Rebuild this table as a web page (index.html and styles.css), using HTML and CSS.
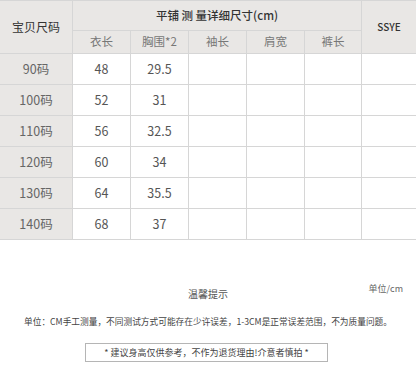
FILE: index.html
```html
<!DOCTYPE html>
<html lang="zh">
<head>
<meta charset="utf-8">
<link rel="stylesheet" href="styles.css">
</head>
<body>
<table class="size-table">
  <colgroup>
    <col class="c-size"><col class="c-m"><col class="c-m"><col class="c-m"><col class="c-m"><col class="c-m5"><col class="c-brand">
  </colgroup>
  <thead>
    <tr class="h1">
      <th rowspan="2" class="main">宝贝尺码</th>
      <th colspan="5" class="main title">平铺 测 量详细尺寸(cm)</th>
      <th rowspan="2" class="brand">SSYE</th>
    </tr>
    <tr class="h2">
      <th>衣长</th><th>胸围*2</th><th>袖长</th><th>肩宽</th><th>裤长</th>
    </tr>
  </thead>
  <tbody>
    <tr><td class="size">90码</td><td>48</td><td>29.5</td><td></td><td></td><td></td><td></td></tr>
    <tr><td class="size">100码</td><td>52</td><td>31</td><td></td><td></td><td></td><td></td></tr>
    <tr><td class="size">110码</td><td>56</td><td>32.5</td><td></td><td></td><td></td><td></td></tr>
    <tr><td class="size">120码</td><td>60</td><td>34</td><td></td><td></td><td></td><td></td></tr>
    <tr><td class="size">130码</td><td>64</td><td>35.5</td><td></td><td></td><td></td><td></td></tr>
    <tr><td class="size">140码</td><td>68</td><td>37</td><td></td><td></td><td></td><td></td></tr>
  </tbody>
</table>

<section class="notes">
  <div class="notes-head">
    <span></span>
    <h2 class="notes-title">温馨提示</h2>
    <span class="unit">单位/cm</span>
  </div>
  <p class="notes-text">单位：CM手工测量，不同测试方式可能存在少许误差，1-3CM是正常误差范围，不为质量问题。</p>
  <div class="notice-box">* 建议身高仅供参考，不作为退货理由!介意者慎拍 *</div>
</section>
</body>
</html>
```
FILE: styles.css
```css
html, body {
  margin: 0;
  padding: 0;
  background: #ffffff;
  width: 416px;
  overflow: hidden;
}
body {
  font-family: "Noto Sans CJK SC", "Noto Sans", sans-serif;
  color: #555;
}
.size-table {
  border-collapse: collapse;
  table-layout: fixed;
  width: 417px;
  margin: 0 0 0 -1px;
}
.c-size { width: 73px; }
.c-m { width: 58px; }
.c-m5 { width: 57px; }
.c-brand { width: 55px; }
.size-table th,
.size-table td {
  border: 1px solid #d6d6d6;
  padding: 0;
  text-align: center;
  vertical-align: middle;
  line-height: 1;
}
.size-table th {
  background: #e9e7e5;
  font-weight: normal;
  font-size: 11.5px;
  color: #777;
}
.size-table th.main {
  color: #333;
  font-size: 12px;
}
.size-table th.title {
  font-weight: 500;
  font-size: 11.5px;
}
.size-table th.brand {
  color: #333;
  font-size: 10px;
  font-weight: 500;
}
.h1 { height: 30px; }
.h2 { height: 23px; }
.size-table tbody tr { height: 31px; }
.size-table td {
  font-size: 12.5px;
  color: #555;
  background: #fff;
}
.size-table td.size {
  background: #e9e7e5;
  color: #666;
}
.notes {
  padding-top: 43px;
}
.notes-head {
  display: grid;
  grid-template-columns: 1fr auto 1fr;
  align-items: start;
}
.notes-title {
  margin: 5px 0 0;
  font-size: 10px;
  font-weight: normal;
  color: #555;
  line-height: 12px;
}
.unit {
  justify-self: end;
  margin-right: 13px;
  font-size: 9px;
  color: #666;
  line-height: 11px;
}
.notes-text {
  margin: 16px 0 0;
  text-align: center;
  font-size: 8.7px;
  line-height: 12px;
  color: #444;
}
.notice-box {
  width: 241px;
  margin: 15px 0 0 85px;
  border: 1px solid #b5b5b5;
  height: 17px;
  line-height: 17px;
  text-align: center;
  font-size: 9px;
  color: #444;
}
```
